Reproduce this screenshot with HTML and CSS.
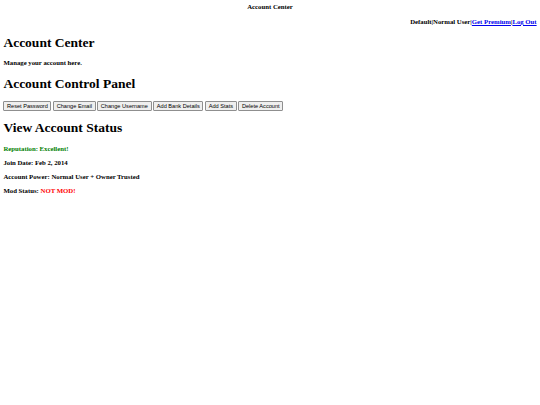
FILE: index.html
```html
<!DOCTYPE html>
<html lang="en">
<head>
<meta charset="utf-8">
<title>Account Center</title>
<link rel="stylesheet" href="styles.css">
</head>
<body class="page">
  <div class="site-title">Account Center</div>
  <p class="user-nav">Default|Normal User|<a href="#">Get Premium</a>|<a href="#">Log Out</a></p>
  <h1 class="heading">Account Center</h1>
  <p class="line">Manage your account here.</p>
  <h1 class="heading">Account Control Panel</h1>
  <div class="actions">
    <button class="btn" type="button">Reset Password</button>
    <button class="btn" type="button">Change Email</button>
    <button class="btn" type="button">Change Username</button>
    <button class="btn" type="button">Add Bank Details</button>
    <button class="btn" type="button">Add Stats</button>
    <button class="btn" type="button">Delete Account</button>
  </div>
  <h1 class="heading">View Account Status</h1>
  <p class="line good">Reputation: Excellent!</p>
  <p class="line">Join Date: Feb 2, 2014</p>
  <p class="line">Account Power: Normal User + Owner Trusted</p>
  <p class="line">Mod Status: <span class="bad">NOT MOD!</span></p>
</body>
</html>
```

FILE: styles.css
```css
html {
  background: #ffffff;
}
.page {
  margin: 3.4px;
  font-family: "Liberation Serif", "Times New Roman", serif;
  font-size: 6.75px;
  line-height: 7.7px;
  color: #000000;
}
.site-title {
  text-align: center;
  font-weight: bold;
}
.user-nav {
  text-align: right;
  font-weight: bold;
  margin: 6.9px 0 6.2px;
}
.user-nav a {
  color: #0000ee;
  text-decoration: underline;
}
.heading {
  font-size: 13.5px;
  line-height: 15.5px;
  font-weight: bold;
  margin: 8.9px 0 9px;
}
.line {
  font-weight: bold;
  margin: 6.3px 0;
}
.actions {
  line-height: 9px;
  padding-top: 0.5px;
}
.good {
  color: #008000;
}
.bad {
  color: #ff0000;
}
.btn {
  appearance: none;
  -webkit-appearance: none;
  margin: 0;
  font-family: "Liberation Sans", Arial, sans-serif;
  font-size: 5.625px;
  line-height: 6.5px;
  color: #000000;
  background: #efefef;
  border: 0.6px solid #8f8f8f;
  border-radius: 1px;
  padding: 1px 2.6px;
}
```
